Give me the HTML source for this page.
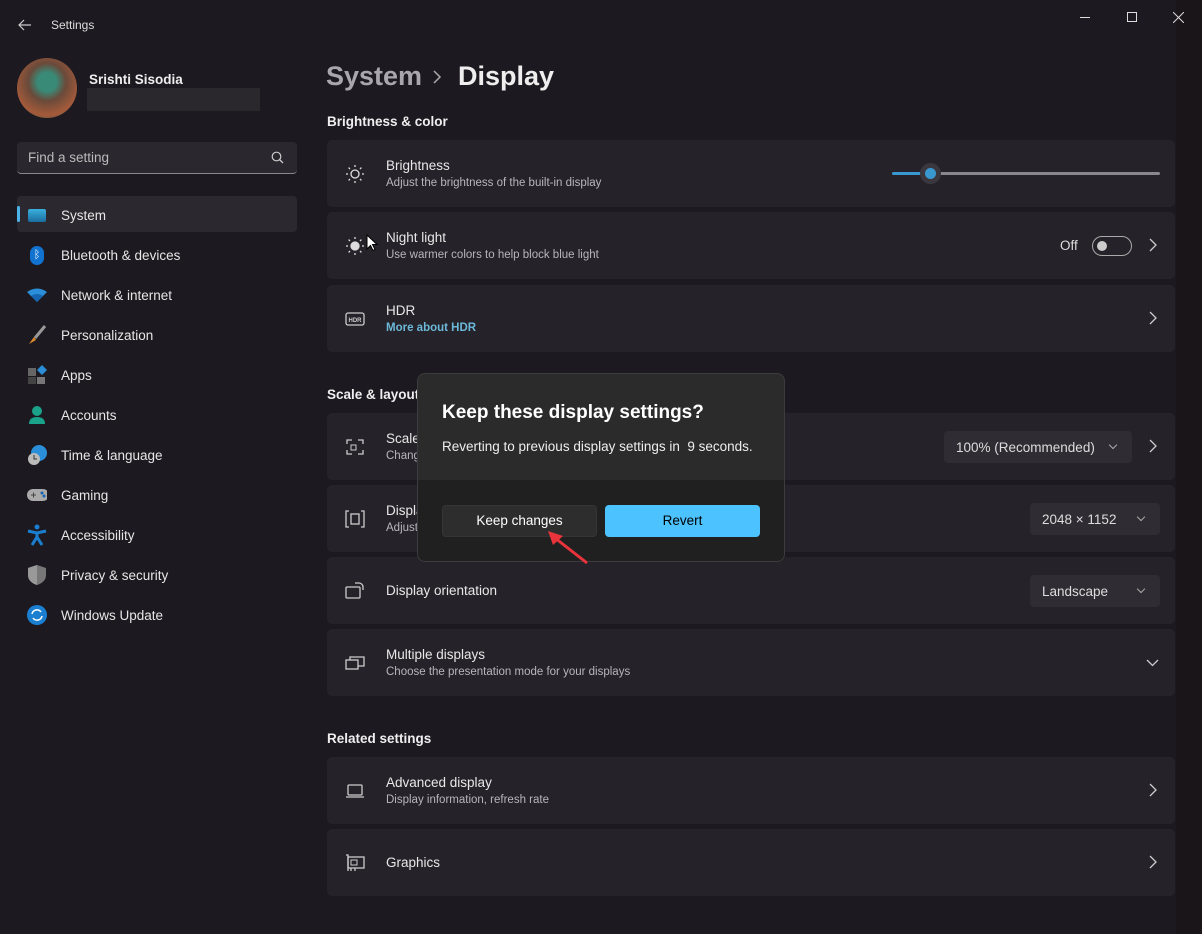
<!DOCTYPE html>
<html><head><meta charset="utf-8"><style>
*{box-sizing:border-box;margin:0;padding:0}
body{width:1202px;height:934px;background:#1c1920;font-family:"Segoe UI","Liberation Sans",sans-serif;color:#fff;position:relative;overflow:hidden}
.abs{position:absolute}
.t{font-size:12px;color:#ddd}
.nav{position:absolute;left:17px;width:280px;height:36px;display:flex;align-items:center;font-size:13.5px;color:#e6e6e6;padding-top:2px}
.nav .ic{width:20px;height:20px;margin:0 14px 0 10px;display:flex;align-items:center;justify-content:center}
.card{position:absolute;left:327px;width:848px;height:67px;background:#252229;border-radius:5px}
.card .ti{position:absolute;left:59px;font-size:13.5px;color:#e8e8e8}
.card .su{position:absolute;left:59px;font-size:11.5px;color:#b8b6bc}
.card .ico{position:absolute;left:18px;top:24px;width:20px;height:20px}
.chev{position:absolute;right:18px;top:26px;width:8px;height:14px}
.sec{position:absolute;left:327px;font-size:13.5px;font-weight:bold;color:#eee}
.dd{position:absolute;height:32px;background:#2f2c33;border-radius:4px;font-size:13.5px;color:#ddd;display:flex;align-items:center;padding-left:12px}
.dd:after{content:"";position:absolute;right:16px;top:11px;width:5px;height:5px;border-right:1px solid #aaa;border-bottom:1px solid #aaa;transform:rotate(45deg)}
</style></head><body>
<div class="abs" style="left:1176px;top:0;width:26px;height:934px;background:#1a1519"></div>
<svg class="abs" style="left:18px;top:19px" width="14" height="12"><path d="M13 6H1M6 1L1 6l5 5" stroke="#ccc" fill="none" stroke-width="1.2"/></svg>
<div class="abs t" style="left:51px;top:18px;font-size:12px;color:#ddd">Settings</div>
<div class="abs" style="left:1080px;top:17px;width:10px;height:1px;background:#ddd"></div>
<div class="abs" style="left:1127px;top:12px;width:10px;height:10px;border:1px solid #ddd"></div>
<svg class="abs" style="left:1173px;top:12px" width="11" height="11"><path d="M0 0L11 11M11 0L0 11" stroke="#ddd"/></svg>
<div class="abs" style="left:17px;top:58px;width:60px;height:60px;border-radius:50%;background:radial-gradient(circle at 50% 40%,#3a8a78 0 20%,#6a4a3a 40%,#a45a3a 70%,#3a5a4a)"></div>
<div class="abs" style="left:89px;top:72px;font-size:13.5px;font-weight:bold;color:#eee">Srishti Sisodia</div>
<div class="abs" style="left:87px;top:88px;width:173px;height:23px;background:#2a282d"></div>
<div class="abs" style="left:17px;top:142px;width:280px;height:32px;background:#2a272e;border-radius:4px;border-bottom:1px solid #8a888c"></div>
<div class="abs" style="left:28px;top:150px;font-size:13.5px;color:#bbb">Find a setting</div>
<svg class="abs" style="left:271px;top:151px" width="13" height="13"><circle cx="5.5" cy="5.5" r="4.3" stroke="#ccc" fill="none" stroke-width="1.2"/><path d="M8.5 8.5L12 12" stroke="#ccc" stroke-width="1.3"/></svg>
<div class="abs" style="left:17px;top:196px;width:280px;height:36px;background:#2b2830;border-radius:4px"></div>
<div class="abs" style="left:17px;top:206px;width:3px;height:16px;background:#4cb3e8;border-radius:2px"></div>
<div class="nav" style="top:196px"><div class="ic"><div style="width:18px;height:13px;background:linear-gradient(#3ab0dd,#1a6ea0);border-radius:2px"></div></div>System</div>
<div class="nav" style="top:236px"><div class="ic"><div style="width:14px;height:19px;background:#1272d0;border-radius:7px;color:#fff;font-size:11px;text-align:center;line-height:19px">ᛒ</div></div>Bluetooth &amp; devices</div>
<div class="nav" style="top:276px"><div class="ic"><svg width="20" height="14"><path d="M0 4Q10-3 20 4L10 14Z" fill="#2a8fd8"/><path d="M4 8Q10 4 16 8L10 14Z" fill="#1565b0"/></svg></div>Network &amp; internet</div>
<div class="nav" style="top:316px"><div class="ic"><svg width="20" height="20"><path d="M18 1L8 13" stroke="#999" stroke-width="3"/><path d="M7 12L2 19 9 15Z" fill="#e08a30"/></svg></div>Personalization</div>
<div class="nav" style="top:356px"><div class="ic"><svg width="20" height="20"><rect x="1" y="3" width="8" height="8" fill="#666"/><rect x="1" y="12" width="8" height="7" fill="#444"/><rect x="10" y="12" width="8" height="7" fill="#777"/><path d="M15 0L20 5 15 10 10 5Z" fill="#2a8fd8"/></svg></div>Apps</div>
<div class="nav" style="top:396px"><div class="ic"><svg width="20" height="20"><circle cx="10" cy="6" r="5" fill="#1aa28a"/><path d="M2 19Q2 12 10 12Q18 12 18 19Z" fill="#1aa28a"/></svg></div>Accounts</div>
<div class="nav" style="top:436px"><div class="ic"><svg width="22" height="22"><circle cx="12" cy="9" r="8" fill="#2a8fd8"/><circle cx="7" cy="15" r="6" fill="#bbb"/><path d="M7 11v4h3" stroke="#333" fill="none"/></svg></div>Time &amp; language</div>
<div class="nav" style="top:476px"><div class="ic"><svg width="22" height="14"><rect x="0" y="1" width="22" height="12" rx="6" fill="#aaa"/><circle cx="15" cy="5" r="1.5" fill="#1565b0"/><circle cx="17" cy="8" r="1.5" fill="#1565b0"/><path d="M4 7h5M6.5 4.5v5" stroke="#444"/></svg></div>Gaming</div>
<div class="nav" style="top:516px"><div class="ic"><svg width="20" height="22"><circle cx="10" cy="3" r="2.5" fill="#1a7fd0"/><path d="M1 7L10 9 19 7M10 9V13L5 21M10 13L15 21" stroke="#1a7fd0" stroke-width="3" fill="none"/></svg></div>Accessibility</div>
<div class="nav" style="top:556px"><div class="ic"><svg width="18" height="20"><path d="M9 0L18 3V10Q18 17 9 20Q0 17 0 10V3Z" fill="#777"/><path d="M9 0V20Q0 17 0 10V3Z" fill="#999"/></svg></div>Privacy &amp; security</div>
<div class="nav" style="top:596px"><div class="ic"><svg width="20" height="20"><circle cx="10" cy="10" r="10" fill="#1a7fd0"/><path d="M5 9A5 5 0 0 1 14 7M15 11A5 5 0 0 1 6 13" stroke="#fff" stroke-width="1.5" fill="none"/></svg></div>Windows Update</div>
<div class="abs" style="left:326px;top:61px;font-size:27px;font-weight:600;color:#a9a6ad">System</div>
<svg class="abs" style="left:433px;top:70px" width="9" height="14"><path d="M1 1l6 6-6 6" stroke="#aaa" fill="none" stroke-width="1.5"/></svg>
<div class="abs" style="left:458px;top:61px;font-size:27px;font-weight:600;color:#eee">Display</div>
<div class="sec" style="top:114px">Brightness &amp; color</div>
<div class="card" style="top:140px"><svg class="ico" viewBox="0 0 20 20"><circle cx="10" cy="10" r="4" stroke="#ddd" fill="none" stroke-width="1.3"/><g stroke="#ddd" stroke-width="1.3"><path d="M10 1v2M10 17v2M1 10h2M17 10h2M3.6 3.6l1.4 1.4M15 15l1.4 1.4M3.6 16.4L5 15M15 5l1.4-1.4"/></g></svg><div class="ti" style="top:18px">Brightness</div><div class="su" style="top:37px">Adjust the brightness of the built-in display</div>
<div class="abs" style="left:565px;top:32px;width:40px;height:3px;background:#3a98d0;border-radius:2px"></div><div class="abs" style="left:605px;top:32px;width:228px;height:3px;background:#8a888c;border-radius:2px"></div><div class="abs" style="left:593px;top:23px;width:21px;height:21px;border-radius:50%;background:#3a373e"></div><div class="abs" style="left:598px;top:28px;width:11px;height:11px;border-radius:50%;background:#3a98d0"></div></div>
<div class="card" style="top:212px"><svg class="ico" viewBox="0 0 20 20"><circle cx="10" cy="10" r="4" stroke="#ddd" fill="#ddd" stroke-width="1.3"/><g stroke="#ddd" stroke-width="1.3"><path d="M10 1v2M10 17v2M1 10h2M17 10h2M3.6 3.6l1.4 1.4M15 15l1.4 1.4M3.6 16.4L5 15M15 5l1.4-1.4"/></g></svg><svg class="abs" style="left:39px;top:22px" width="12" height="18"><path d="M1 1v14l3.5-3.5 2.5 5 2-1-2.5-5H11Z" fill="#fff" stroke="#000"/></svg><div class="ti" style="top:18px">Night light</div><div class="su" style="top:37px">Use warmer colors to help block blue light</div>
<div class="abs" style="left:733px;top:26px;font-size:13.5px;color:#ddd">Off</div><div class="abs" style="left:765px;top:24px;width:40px;height:20px;border:1px solid #aaa;border-radius:10px"></div><div class="abs" style="left:770px;top:29px;width:10px;height:10px;border-radius:50%;background:#ccc"></div><svg class="chev" viewBox="0 0 8 14"><path d="M1 1l6 6-6 6" stroke="#ccc" fill="none" stroke-width="1.3"/></svg></div>
<div class="card" style="top:285px"><svg class="ico" viewBox="0 0 20 20"><rect x="1" y="4" width="18" height="12" rx="2" stroke="#ccc" fill="none" stroke-width="1.3"/><text x="10" y="13" font-size="6" fill="#ccc" text-anchor="middle" font-family="Liberation Sans" font-weight="bold">HDR</text></svg><div class="ti" style="top:18px">HDR</div><div class="su" style="top:37px;color:#6cb8d8;font-weight:bold">More about HDR</div><svg class="chev" viewBox="0 0 8 14"><path d="M1 1l6 6-6 6" stroke="#ccc" fill="none" stroke-width="1.3"/></svg></div>
<div class="sec" style="top:387px">Scale &amp; layout</div>
<div class="card" style="top:413px"><svg class="ico" viewBox="0 0 20 20"><path d="M2 7V3h5M13 3h5v4M18 13v4h-5M7 17H2v-4" stroke="#ccc" fill="none" stroke-width="1.3"/><rect x="6" y="8" width="5" height="5" stroke="#ccc" fill="none"/></svg><div class="ti" style="top:18px">Scale</div><div class="su" style="top:37px">Change the size of text, apps, and other items</div><div class="dd" style="left:617px;top:18px;width:188px">100% (Recommended)</div><svg class="chev" viewBox="0 0 8 14"><path d="M1 1l6 6-6 6" stroke="#ccc" fill="none" stroke-width="1.3"/></svg></div>
<div class="card" style="top:485px"><svg class="ico" viewBox="0 0 20 20"><path d="M4 2H1v16h3M16 2h3v16h-3" stroke="#ccc" fill="none" stroke-width="1.3"/><rect x="6" y="5" width="8" height="10" stroke="#ccc" fill="none" stroke-width="1.3"/></svg><div class="ti" style="top:18px">Display resolution</div><div class="su" style="top:37px">Adjust the resolution to fit your connected display</div><div class="dd" style="left:703px;top:18px;width:130px">2048 × 1152</div></div>
<div class="card" style="top:557px"><svg class="ico" viewBox="0 0 20 20"><rect x="1" y="6" width="14" height="11" rx="1" stroke="#ccc" fill="none" stroke-width="1.3"/><path d="M10 2h4a4 4 0 0 1 4 4v3" stroke="#ccc" fill="none" stroke-width="1.3"/></svg><div class="ti" style="top:26px">Display orientation</div><div class="dd" style="left:703px;top:18px;width:130px">Landscape</div></div>
<div class="card" style="top:629px"><svg class="ico" viewBox="0 0 20 20"><rect x="1" y="7" width="12" height="9" stroke="#ccc" fill="none" stroke-width="1.3"/><path d="M5 7V4h14v9h-6" stroke="#ccc" fill="none" stroke-width="1.3"/></svg><div class="ti" style="top:18px">Multiple displays</div><div class="su" style="top:37px">Choose the presentation mode for your displays</div><svg class="abs" style="right:16px;top:30px" width="13" height="8"><path d="M1 1l5.5 5.5L12 1" stroke="#ccc" fill="none" stroke-width="1.3"/></svg></div>
<div class="sec" style="top:731px">Related settings</div>
<div class="card" style="top:757px"><svg class="ico" viewBox="0 0 20 20"><rect x="3" y="4" width="14" height="10" rx="1" stroke="#ccc" fill="none" stroke-width="1.3"/><path d="M1 16h18" stroke="#ccc" stroke-width="1.3"/></svg><div class="ti" style="top:18px">Advanced display</div><div class="su" style="top:37px">Display information, refresh rate</div><svg class="chev" viewBox="0 0 8 14"><path d="M1 1l6 6-6 6" stroke="#ccc" fill="none" stroke-width="1.3"/></svg></div>
<div class="card" style="top:829px"><svg class="ico" viewBox="0 0 20 20"><rect x="3" y="4" width="16" height="11" stroke="#ccc" fill="none" stroke-width="1.3"/><path d="M1 2h2v16M6 15v3M10 15v3" stroke="#ccc" fill="none" stroke-width="1.3"/><rect x="6" y="7" width="6" height="5" stroke="#ccc" fill="none"/></svg><div class="ti" style="top:26px">Graphics</div><svg class="chev" viewBox="0 0 8 14"><path d="M1 1l6 6-6 6" stroke="#ccc" fill="none" stroke-width="1.3"/></svg></div>
<div class="abs" style="left:417px;top:373px;width:368px;height:189px;background:#2b2b2b;border:1px solid #3c3c3c;border-radius:8px;overflow:hidden">
<div class="abs" style="left:24px;top:28px;font-size:19px;font-weight:600;color:#fff">Keep these display settings?</div>
<div class="abs" style="left:24px;top:65px;font-size:13.5px;color:#eee">Reverting to previous display settings in &nbsp;9 seconds.</div>
<div class="abs" style="left:0;top:106px;width:368px;height:83px;background:#202020"></div>
<div class="abs" style="left:24px;top:131px;width:155px;height:32px;background:#2d2d2d;border:1px solid #353535;border-radius:4px;font-size:13.5px;color:#fff;text-align:center;line-height:30px">Keep changes</div>
<div class="abs" style="left:187px;top:131px;width:155px;height:32px;background:#4cc2ff;border-radius:4px;font-size:13.5px;color:#000;text-align:center;line-height:32px">Revert</div>
</div>
<svg class="abs" style="left:545px;top:528px" width="45" height="38"><path d="M42 35L10 10" stroke="#e8343a" stroke-width="3"/><path d="M3 3L18 8 8 17Z" fill="#e8343a"/></svg>
</body></html>
